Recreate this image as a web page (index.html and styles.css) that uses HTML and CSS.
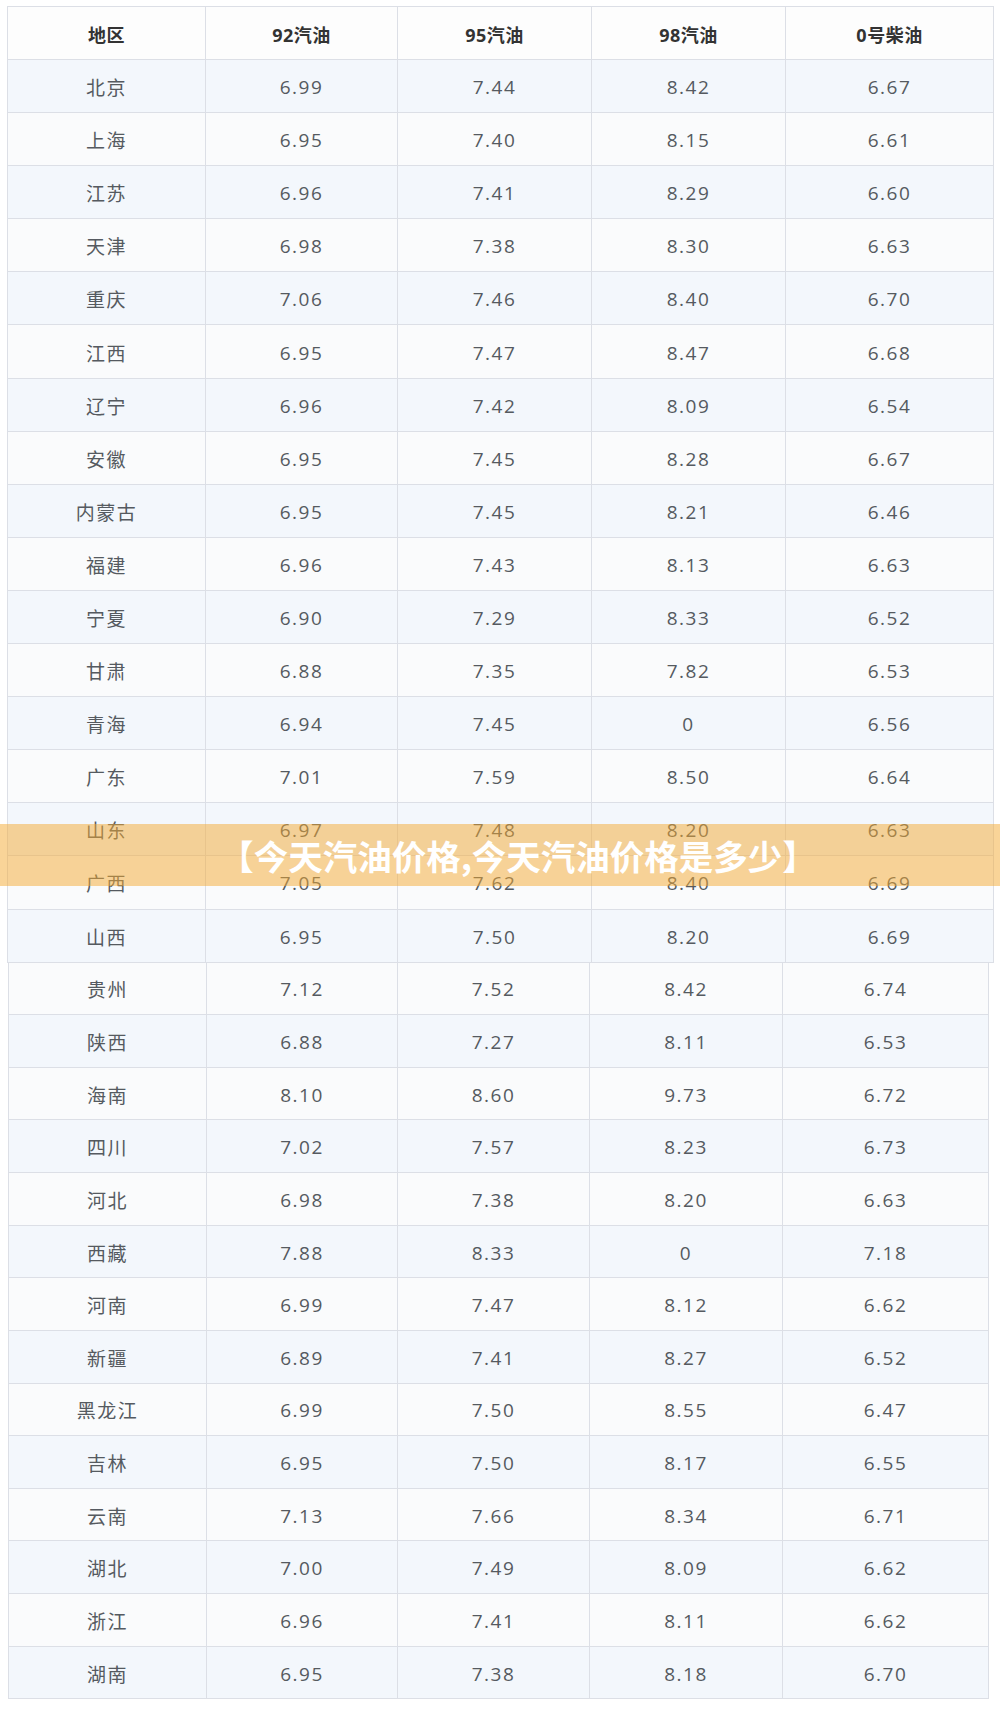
FILE: index.html
```html
<!DOCTYPE html>
<html lang="zh-CN">
<head>
<meta charset="utf-8">
<title>今天汽油价格</title>
<link rel="stylesheet" href="styles.css">
</head>
<body>
<div class="page">
  <div class="tbl tbl-top">
    <div class="row head"><div class="c">地区</div><div class="c">92汽油</div><div class="c">95汽油</div><div class="c">98汽油</div><div class="c">0号柴油</div></div>
    <div class="row odd"><div class="c">北京</div><div class="c">6.99</div><div class="c">7.44</div><div class="c">8.42</div><div class="c">6.67</div></div>
    <div class="row even"><div class="c">上海</div><div class="c">6.95</div><div class="c">7.40</div><div class="c">8.15</div><div class="c">6.61</div></div>
    <div class="row odd"><div class="c">江苏</div><div class="c">6.96</div><div class="c">7.41</div><div class="c">8.29</div><div class="c">6.60</div></div>
    <div class="row even"><div class="c">天津</div><div class="c">6.98</div><div class="c">7.38</div><div class="c">8.30</div><div class="c">6.63</div></div>
    <div class="row odd"><div class="c">重庆</div><div class="c">7.06</div><div class="c">7.46</div><div class="c">8.40</div><div class="c">6.70</div></div>
    <div class="row even"><div class="c">江西</div><div class="c">6.95</div><div class="c">7.47</div><div class="c">8.47</div><div class="c">6.68</div></div>
    <div class="row odd"><div class="c">辽宁</div><div class="c">6.96</div><div class="c">7.42</div><div class="c">8.09</div><div class="c">6.54</div></div>
    <div class="row even"><div class="c">安徽</div><div class="c">6.95</div><div class="c">7.45</div><div class="c">8.28</div><div class="c">6.67</div></div>
    <div class="row odd"><div class="c">内蒙古</div><div class="c">6.95</div><div class="c">7.45</div><div class="c">8.21</div><div class="c">6.46</div></div>
    <div class="row even"><div class="c">福建</div><div class="c">6.96</div><div class="c">7.43</div><div class="c">8.13</div><div class="c">6.63</div></div>
    <div class="row odd"><div class="c">宁夏</div><div class="c">6.90</div><div class="c">7.29</div><div class="c">8.33</div><div class="c">6.52</div></div>
    <div class="row even"><div class="c">甘肃</div><div class="c">6.88</div><div class="c">7.35</div><div class="c">7.82</div><div class="c">6.53</div></div>
    <div class="row odd"><div class="c">青海</div><div class="c">6.94</div><div class="c">7.45</div><div class="c">0</div><div class="c">6.56</div></div>
    <div class="row even"><div class="c">广东</div><div class="c">7.01</div><div class="c">7.59</div><div class="c">8.50</div><div class="c">6.64</div></div>
    <div class="row odd"><div class="c">山东</div><div class="c">6.97</div><div class="c">7.48</div><div class="c">8.20</div><div class="c">6.63</div></div>
    <div class="row even"><div class="c">广西</div><div class="c">7.05</div><div class="c">7.62</div><div class="c">8.40</div><div class="c">6.69</div></div>
    <div class="row odd"><div class="c">山西</div><div class="c">6.95</div><div class="c">7.50</div><div class="c">8.20</div><div class="c">6.69</div></div>
  </div>
  <div class="tbl tbl-bottom">
    <div class="row even"><div class="c">贵州</div><div class="c">7.12</div><div class="c">7.52</div><div class="c">8.42</div><div class="c">6.74</div></div>
    <div class="row odd"><div class="c">陕西</div><div class="c">6.88</div><div class="c">7.27</div><div class="c">8.11</div><div class="c">6.53</div></div>
    <div class="row even"><div class="c">海南</div><div class="c">8.10</div><div class="c">8.60</div><div class="c">9.73</div><div class="c">6.72</div></div>
    <div class="row odd"><div class="c">四川</div><div class="c">7.02</div><div class="c">7.57</div><div class="c">8.23</div><div class="c">6.73</div></div>
    <div class="row even"><div class="c">河北</div><div class="c">6.98</div><div class="c">7.38</div><div class="c">8.20</div><div class="c">6.63</div></div>
    <div class="row odd"><div class="c">西藏</div><div class="c">7.88</div><div class="c">8.33</div><div class="c">0</div><div class="c">7.18</div></div>
    <div class="row even"><div class="c">河南</div><div class="c">6.99</div><div class="c">7.47</div><div class="c">8.12</div><div class="c">6.62</div></div>
    <div class="row odd"><div class="c">新疆</div><div class="c">6.89</div><div class="c">7.41</div><div class="c">8.27</div><div class="c">6.52</div></div>
    <div class="row even"><div class="c">黑龙江</div><div class="c">6.99</div><div class="c">7.50</div><div class="c">8.55</div><div class="c">6.47</div></div>
    <div class="row odd"><div class="c">吉林</div><div class="c">6.95</div><div class="c">7.50</div><div class="c">8.17</div><div class="c">6.55</div></div>
    <div class="row even"><div class="c">云南</div><div class="c">7.13</div><div class="c">7.66</div><div class="c">8.34</div><div class="c">6.71</div></div>
    <div class="row odd"><div class="c">湖北</div><div class="c">7.00</div><div class="c">7.49</div><div class="c">8.09</div><div class="c">6.62</div></div>
    <div class="row even"><div class="c">浙江</div><div class="c">6.96</div><div class="c">7.41</div><div class="c">8.11</div><div class="c">6.62</div></div>
    <div class="row odd"><div class="c">湖南</div><div class="c">6.95</div><div class="c">7.38</div><div class="c">8.18</div><div class="c">6.70</div></div>
  </div>
  <div class="banner">【今天汽油价格,今天汽油价格是多少】</div>
</div>
</body>
</html>
```
FILE: styles.css
```css
html, body {
  margin: 0;
  padding: 0;
  background: #ffffff;
}

.page {
  position: relative;
  width: 1000px;
  height: 1711px;
  padding-top: 6px;
  box-sizing: border-box;
  font-family: "Open Sans", "Noto Sans CJK SC", sans-serif;
  font-size: 19px;
  letter-spacing: 1.5px;
  color: #555a60;
}

.tbl {
  display: flex;
  flex-direction: column;
  border-left: 1px solid #dcdfe6;
}

.tbl-top {
  margin-left: 7px;
  width: 987px;
  box-sizing: border-box;
  border-top: 1px solid #dcdfe6;
}

.tbl-bottom {
  margin-left: 8px;
  width: 981px;
  box-sizing: border-box;
}

.row {
  display: grid;
}

.tbl-top .row {
  grid-template-columns: 198px 192px 194px 194px 208px;
  height: 53.1px;
}

.tbl-top .row.head {
  height: 53px;
}

.tbl-bottom .row {
  grid-template-columns: 198px 191px 192px 193px 206px;
  height: 52.64px;
}

.c {
  display: flex;
  align-items: center;
  justify-content: center;
  box-sizing: border-box;
  border-right: 1px solid #dcdfe6;
  border-bottom: 1px solid #dcdfe6;
  padding-top: 2px;
}

.head {
  background: #fdfdfd;
  color: #333333;
  font-weight: 700;
  font-size: 18px;
  letter-spacing: 0.5px;
}

.odd {
  background: #f3f7fc;
}

.even {
  background: #fafbfc;
}

.banner {
  position: absolute;
  left: 0;
  right: 0;
  top: 824px;
  height: 62px;
  display: flex;
  align-items: center;
  justify-content: center;
  background: rgba(244, 170, 50, 0.5);
  color: #ffffff;
  font-family: "Noto Sans CJK SC", sans-serif;
  font-weight: 700;
  font-size: 34.5px;
  letter-spacing: 0;
  padding-left: 36px;
  box-sizing: border-box;
}
```
